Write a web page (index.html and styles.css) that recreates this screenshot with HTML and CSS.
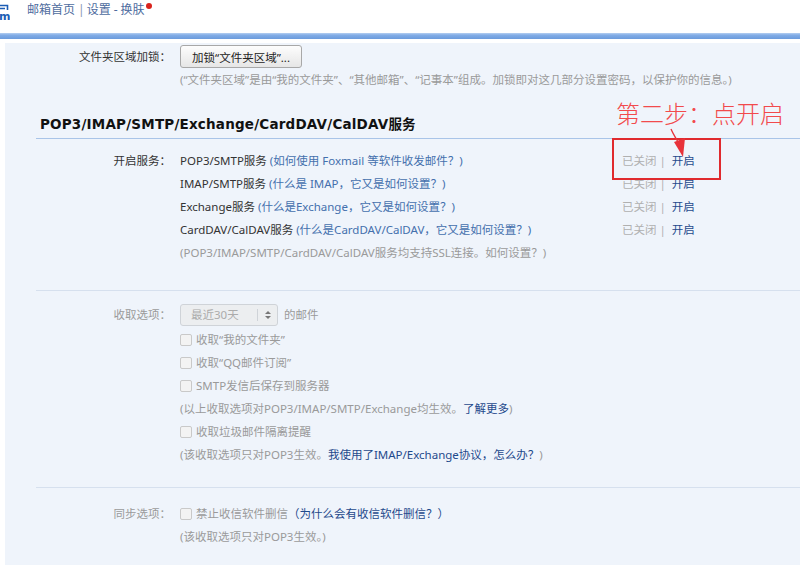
FILE: index.html
```html
<!DOCTYPE html>
<html lang="zh-CN">
<head>
    <meta charset="UTF-8">
    <title>设置 - 账户</title>
    <link rel="stylesheet" href="styles.css">
</head>
<body>
    <div class="topbar">
        <svg class="logo" width="10" height="22" viewBox="0 0 10 22">
            <path d="M0 4.5h7.5v4.5M0 7.5h5" fill="none" stroke="#1c5db5" stroke-width="1.6"/>
            <text x="-1" y="19" font-size="11" font-weight="bold" fill="#1c5db5" font-family="DejaVu Sans, sans-serif">m</text>
        </svg>
        <nav class="topnav">
            <a href="#">邮箱首页</a><span class="bar">|</span><a href="#">设置</a><span class="dash">-</span><a href="#">换肤</a><i class="dot"></i>
        </nav>
    </div>
    <div class="bluebar"></div>

    <div class="panel">
        <!-- folder lock -->
        <div class="field">
            <div class="field-label lh23 dark">文件夹区域加锁：</div>
            <div class="field-body">
                <button class="btn">加锁“文件夹区域”...</button>
                <div class="line muted">(“文件夹区域”是由“我的文件夹”、“其他邮箱”、“记事本”组成。加锁即对这几部分设置密码，以保护你的信息。)</div>
            </div>
        </div>

        <h2 class="section-title">POP3/IMAP/SMTP/Exchange/CardDAV/CalDAV服务</h2>

        <div class="field services">
            <div class="field-label line dark">开启服务：</div>
            <div class="field-body">
                <div class="line svc">
                    <span class="svc-desc">POP3/SMTP服务 <a href="#" class="link">(如何使用 Foxmail 等软件收发邮件？)</a></span>
                    <span class="svc-state">已关闭<span class="pipe">|</span><a href="#" class="on">开启</a></span>
                </div>
                <div class="line svc">
                    <span class="svc-desc">IMAP/SMTP服务 <a href="#" class="link">(什么是 IMAP，它又是如何设置？)</a></span>
                    <span class="svc-state">已关闭<span class="pipe">|</span><a href="#" class="on">开启</a></span>
                </div>
                <div class="line svc">
                    <span class="svc-desc">Exchange服务 <a href="#" class="link">(什么是Exchange，它又是如何设置？)</a></span>
                    <span class="svc-state">已关闭<span class="pipe">|</span><a href="#" class="on">开启</a></span>
                </div>
                <div class="line svc">
                    <span class="svc-desc">CardDAV/CalDAV服务 <a href="#" class="link">(什么是CardDAV/CalDAV，它又是如何设置？)</a></span>
                    <span class="svc-state">已关闭<span class="pipe">|</span><a href="#" class="on">开启</a></span>
                </div>
                <div class="line muted">(POP3/IMAP/SMTP/CardDAV/CalDAV服务均支持SSL连接。如何设置？)</div>
            </div>
        </div>

        <div class="divider"></div>

        <!-- receive options (disabled) -->
        <div class="field receive">
            <div class="field-label lh22 muted">收取选项：</div>
            <div class="field-body">
                <div class="select-row">
                    <div class="fake-select">
                        <span class="sel-text">最近30天</span>
                        <span class="sel-arrow"><i class="up"></i><i class="down"></i></span>
                    </div>
                    <span class="muted">的邮件</span>
                </div>
                <div class="line check muted"><span class="box"></span>收取“我的文件夹”</div>
                <div class="line check muted"><span class="box"></span>收取“QQ邮件订阅”</div>
                <div class="line check muted"><span class="box"></span>SMTP发信后保存到服务器</div>
                <div class="line muted">(以上收取选项对POP3/IMAP/SMTP/Exchange均生效。<a href="#" class="deep">了解更多</a>)</div>
                <div class="line check muted"><span class="box"></span>收取垃圾邮件隔离提醒</div>
                <div class="line muted">(该收取选项只对POP3生效。<a href="#" class="deep">我使用了IMAP/Exchange协议，怎么办？</a>)</div>
            </div>
        </div>

        <div class="divider second"></div>

        <div class="field sync">
            <div class="field-label line muted">同步选项：</div>
            <div class="field-body">
                <div class="line check muted"><span class="box"></span>禁止收信软件删信 <a href="#" class="deep">（为什么会有收信软件删信？）</a></div>
                <div class="line muted">(该收取选项只对POP3生效。)</div>
            </div>
        </div>
    </div>

    <!-- tutorial annotation drawn over the screenshot -->
    <div class="annot-text">第二步：点开启</div>
    <div class="annot-box"></div>
    <svg class="annot-arrow" width="40" height="40" viewBox="0 0 40 40">
        <path d="M11 2 C13 7 16 11 18 15" fill="none" stroke="#e8323a" stroke-width="1.3"/>
        <path d="M14 15 L25 11 L23 30 Z" fill="#e8323a"/>
    </svg>
</body>
</html>
```

FILE: styles.css
```css
* {
    box-sizing: border-box;
    margin: 0;
    padding: 0;
}

body {
    background: #fff;
    font-family: "Noto Sans", "Noto Sans CJK SC", sans-serif;
    font-size: 11.5px;
    color: #333;
    position: relative;
    width: 800px;
    height: 565px;
    overflow: hidden;
}

a {
    text-decoration: none;
}

/* top header */
.topbar {
    height: 33px;
    display: flex;
    align-items: flex-start;
}

.logo {
    margin-top: 1px;
    flex-shrink: 0;
}

.topnav {
    margin-left: 17px;
    font-size: 12px;
    line-height: 20px;
    color: #4e6c9e;
    display: flex;
    align-items: flex-start;
}

.topnav a {
    color: #4e6c9e;
}

.topnav .bar {
    margin: 0 2px 0 3px;
    color: #8797b3;
}

.topnav .dash {
    margin: 0 3px;
}

.topnav .dot {
    width: 6px;
    height: 6px;
    border-radius: 50%;
    background: #d9231c;
    margin-top: 3px;
    margin-left: 1px;
}

.bluebar {
    height: 6px;
    background: linear-gradient(to bottom, #b5cff1 0%, #82ade6 35%, #6b9bdc 100%);
}

/* main panel */
.panel {
    margin: 4px 0 0 5px;
    background: #eff4fb;
    height: 530px;
    padding-top: 2px;
}

.field {
    display: grid;
    grid-template-columns: 166px 1fr;
    column-gap: 9px;
}

.field-label {
    text-align: right;
    white-space: nowrap;
}

.lh22 {
    line-height: 22px;
}

.lh23 {
    line-height: 23px;
}

.line {
    height: 23px;
    line-height: 23px;
    white-space: nowrap;
}

.dark {
    color: #333;
}

.muted {
    color: #9a9a9a;
}

.btn {
    height: 23px;
    padding: 0 11px;
    font: inherit;
    color: #222;
    background: linear-gradient(to bottom, #fdfdfd, #e6e6e6);
    border: 1px solid #a8a8a8;
    border-radius: 3px;
    display: block;
}

.section-title {
    margin: 22px 0 0 31px;
    padding: 0 0 3px 4px;
    line-height: 22px;
    font-family: "DejaVu Sans", "Noto Sans CJK SC", sans-serif;
    font-size: 13.5px;
    letter-spacing: 0.2px;
    font-weight: bold;
    color: #111;
    border-bottom: 1px solid #a9c4e8;
}

.services {
    margin-top: 10px;
}

.svc {
    display: flex;
}

.svc-desc {
    width: 442px;
    color: #333;
}

.link {
    color: #4470ad;
}

.svc-state {
    color: #b0b0b0;
}

.pipe {
    margin: 0 6px 0 3px;
}

.on {
    color: #1f4a8c;
}

.deep {
    color: #1f4a8c;
}

.divider {
    margin: 26px 0 0 31px;
    height: 1px;
    background: #d6e0ee;
}

.divider.second {
    margin-top: 21px;
}

.receive {
    margin-top: 13px;
}

.select-row {
    height: 24px;
    display: flex;
    align-items: flex-start;
}

.select-row .muted {
    line-height: 22px;
    margin-left: 6px;
}

.fake-select {
    width: 98px;
    height: 22px;
    border: 1px solid #cfd3d8;
    border-radius: 3px;
    background: #eceef0;
    display: flex;
    align-items: center;
    color: #ababab;
}

.sel-text {
    flex: 1;
    padding-left: 10px;
    line-height: 20px;
}

.sel-arrow {
    width: 20px;
    height: 12px;
    border-left: 1px solid #cfd3d8;
    display: flex;
    flex-direction: column;
    align-items: center;
    justify-content: center;
    gap: 2px;
}

.sel-arrow i {
    width: 0;
    height: 0;
    border-left: 3px solid transparent;
    border-right: 3px solid transparent;
}

.sel-arrow .up {
    border-bottom: 3px solid #777;
}

.sel-arrow .down {
    border-top: 3px solid #777;
}

.check {
    display: flex;
    align-items: center;
}

.box {
    width: 12px;
    height: 12px;
    border: 1px solid #c9c9c9;
    border-radius: 2px;
    background: #f3f3f3;
    margin-right: 4px;
    flex-shrink: 0;
}

.sync {
    margin-top: 14px;
}

/* annotation overlay */
.annot-text {
    position: absolute;
    left: 616px;
    top: 97px;
    font-family: "Noto Sans CJK SC", sans-serif;
    font-size: 24px;
    font-weight: 300;
    line-height: 32px;
    color: #f24a4c;
    white-space: nowrap;
}

.annot-box {
    position: absolute;
    left: 612px;
    top: 138px;
    width: 109px;
    height: 42px;
    border: 2px solid #e02a2e;
}

.annot-arrow {
    position: absolute;
    left: 660px;
    top: 127px;
}
```
